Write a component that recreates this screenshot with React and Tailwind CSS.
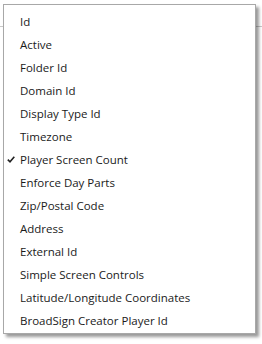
const items = [
  'Id',
  'Active',
  'Folder Id',
  'Domain Id',
  'Display Type Id',
  'Timezone',
  'Player Screen Count',
  'Enforce Day Parts',
  'Zip/Postal Code',
  'Address',
  'External Id',
  'Simple Screen Controls',
  'Latitude/Longitude Coordinates',
  'BroadSign Creator Player Id',
];

export default function App() {
  return (
    <div className="relative w-[262px] h-[344px] bg-white overflow-hidden font-['Open_Sans',sans-serif]">
      <div className="h-[27px] border-b border-[#c8c8c8]" />
      <div className="absolute left-[3px] top-[4px] w-[253px] border border-[#a8a8a8] bg-white shadow-[3px_3px_3px_rgba(0,0,0,0.4)] pt-[5px] pb-[1px]">
        {items.map((label) => (
          <div key={label} className="relative h-[23px] flex items-center pl-[16px] text-[11.5px] text-[#1a1a1a]">
            {label === 'Player Screen Count' && (
              <svg className="absolute left-[3px] top-[8px]" width="8" height="7" viewBox="0 0 8 7">
                <path d="M0.8 3.6 L3 5.8 L7.3 0.8" fill="none" stroke="#222" strokeWidth="1.6" />
              </svg>
            )}
            {label}
          </div>
        ))}
      </div>
    </div>
  );
}
